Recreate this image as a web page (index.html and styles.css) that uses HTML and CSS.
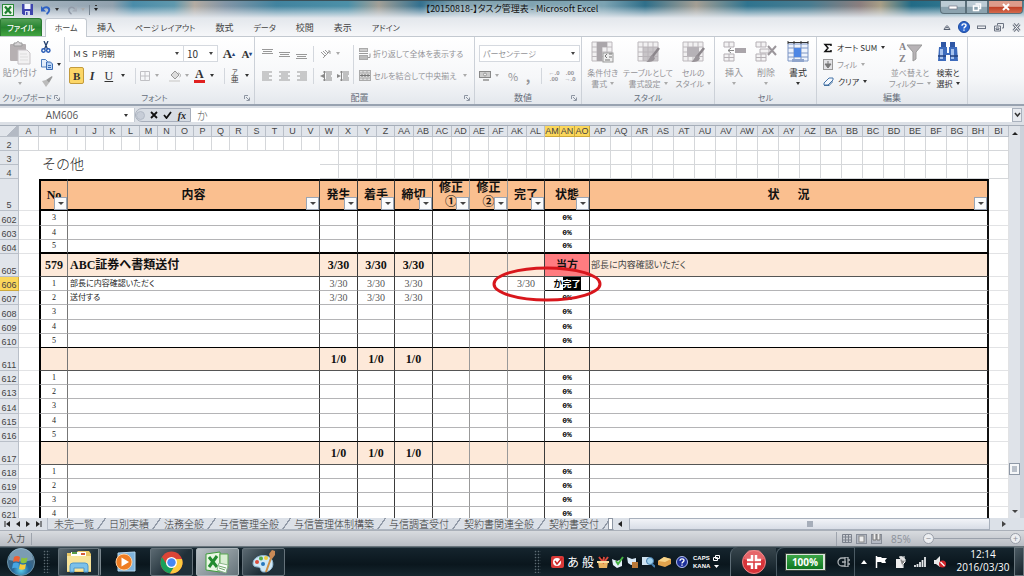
FILE: index.html
```html
<!DOCTYPE html>
<html lang="ja">
<head>
<meta charset="utf-8">
<title>【20150818-】タスク管理表 - Microsoft Excel</title>
<link rel="stylesheet" href="styles.css">
</head>
<body>
<header class="titlebar">
  <div class="quick">
    <svg width="12" height="12" viewBox="0 0 12 12"><rect x=".5" y=".5" width="11" height="11" fill="#e9f5e6" stroke="#2d8a3c"/><path d="M3 2.500L9 9.500M9 2.500L3 9.500" stroke="#1e8030" stroke-width="2.200"/></svg>
    <button aria-label="上書き保存"><svg width="11" height="11" viewBox="0 0 11 11"><path d="M0 0h11v11H1.500L0 9.500z" fill="#3f45ad"/><rect x="2.500" width="6" height="5" fill="#f4f6ff"/><rect x="3" y="7" width="5" height="4" fill="#d6daf2"/><rect x="4" y="8" width="1.500" height="3" fill="#3f45ad"/></svg></button>
    <button aria-label="元に戻す"><svg width="10" height="10" viewBox="0 0 10 10"><path d="M1.500 4C5 1 9 2.500 8 6 7.500 7.500 6.500 8.500 5.500 9" fill="none" stroke="#2f62c4" stroke-width="2"/><path d="M0 1v5.500h5z" fill="#2f62c4"/></svg></button>
    <i class="arrow"></i>
    <button aria-label="やり直し"><svg width="10" height="10" viewBox="0 0 10 10"><path d="M8 4C5 1 1 2.500 2 6 2.500 7.500 3.500 8.500 4.500 9" fill="none" stroke="#929ba8" stroke-width="1.500"/><path d="M10 1v5.500H5z" fill="#a5adb8"/></svg></button>
    <i class="arrow dim"></i><i class="vline"></i><i class="arrow barred"></i>
  </div>
  <h1>【20150818-】タスク管理表 - Microsoft Excel</h1>
  <div class="winbtns">
    <button aria-label="最小化"><svg width="10" height="8"><rect x="1" y="3" width="8" height="3" fill="#fff" stroke="#667" stroke-width=".6"/></svg></button>
    <button aria-label="元のサイズに戻す"><svg width="10" height="9"><path d="M3.500 1h5v4.500H7M1.500 3h5v4.500h-5z" fill="none" stroke="#fff" stroke-width="1.500"/></svg></button>
    <button class="close" aria-label="閉じる"><svg width="10" height="8"><path d="M2 1l6 6M8 1L2 7" stroke="#fff" stroke-width="2"/></svg></button>
  </div>
</header>

<nav class="tabs">
  <button class="file">ファイル</button>
  <button class="tab active">ホーム</button>
  <button class="tab kanji">挿入</button>
  <button class="tab">ページ レイアウト</button>
  <button class="tab kanji">数式</button>
  <button class="tab">データ</button>
  <button class="tab kanji">校閲</button>
  <button class="tab kanji">表示</button>
  <button class="tab">アドイン</button>
  <div class="helpers">
    <button aria-label="リボンの最小化"><svg width="8" height="7"><path d="M1 5.500C1 3 7 3 7 5.500zM2 3.500L4 1.500 6 3.500" fill="none" stroke="#555f70"/></svg></button>
    <button aria-label="ヘルプ"><svg width="12" height="12"><circle cx="6" cy="6" r="5.500" fill="#2d66cc" stroke="#1b489d"/><path d="M4 4.800C4 2.200 8 2.400 8 4.600 8 6 6 5.800 6 7.600M6 8.600v1.200" stroke="#fff" stroke-width="1.400" fill="none"/></svg></button>
    <button aria-label="ブックの最小化"><svg width="9" height="8"><rect x=".5" y="3" width="8" height="2.500" fill="none" stroke="#6c7482"/></svg></button>
    <button aria-label="ブックを元に戻す"><svg width="10" height="9"><path d="M3.500 2.500v-2h6v4.500H8M.5 3h6v5h-6zM2 5h3v1.500H2z" fill="none" stroke="#6c7482"/></svg></button>
    <button aria-label="ブックを閉じる"><svg width="9" height="9"><path d="M1.500 1l6 7M7.500 1l-6 7" stroke="#6c7482" stroke-width="2.800"/><path d="M1.500 1l6 7M7.500 1l-6 7" stroke="#fff" stroke-width="1"/></svg></button>
  </div>
</nav>

<section class="ribbon">
  <div class="group clipboard">
    <div class="tools">
      <button class="big off"><svg width="22" height="24" viewBox="0 0 22 24"><rect x="1" y="3" width="16" height="17" rx="1" fill="#b6b0b2"/><path d="M5 5V2h2.500C8 0 10 0 10.500 2H13v3z" fill="#d7d4d6" stroke="#999"/><path d="M9 9h9l3 3v11H9z" fill="#f2f1f2" stroke="#c6c2c5"/><path d="M11 13h7M11 16h8M11 19h8" stroke="#ddd"/></svg><span>貼り付け</span><i class="arrow dim"></i></button>
      <div class="stack">
        <button aria-label="切り取り"><svg width="10" height="12" viewBox="0 0 10 12"><path d="M3 0l3.500 8M7 0L3.500 8" stroke="#23406e" stroke-width="1.300"/><circle cx="2.500" cy="9.500" r="1.700" fill="none" stroke="#2458b4" stroke-width="1.400"/><circle cx="7.300" cy="9.500" r="1.700" fill="none" stroke="#2458b4" stroke-width="1.400"/></svg></button>
        <button aria-label="コピー"><svg width="12" height="11" viewBox="0 0 12 11"><path d="M.5.5h4l2 2v5.500h-6z" fill="#e3edfa" stroke="#4d7dbd"/><path d="M5.500 3h4l2 2v5.500h-6z" fill="#b8d3f4" stroke="#3b6cb4"/><path d="M7 6.500h3M7 8.500h3" stroke="#3b6cb4"/></svg><i class="arrow"></i></button>
        <button aria-label="書式のコピー"><svg width="12" height="11" viewBox="0 0 12 11"><path d="M1 5l4-1 3 3-3 4z" fill="#bbb"/><path d="M5 4l6-4 .5 1L8 7z" fill="#999"/></svg></button>
      </div>
    </div>
    <div class="caption">クリップボード<svg class="launch" width="6" height="6"><use href="#launch"/></svg></div>
  </div>

  <div class="group font">
    <div class="tools rows">
      <div class="row">
        <span class="combo name"><select aria-label="フォント"><option>ＭＳ Ｐ明朝</option></select></span><span class="combo size"><select aria-label="フォント サイズ"><option>10</option></select></span>
        <button class="serif grow">A<sup>▴</sup></button><button class="serif shrink">A<sup>▾</sup></button>
      </div>
      <div class="row">
        <button class="bold">B</button><button class="serif italic">I</button><button class="serif under">U</button><i class="arrow"></i><i class="vline"></i>
        <button class="off" aria-label="罫線"><svg width="10" height="10"><path d="M.5.5h9v9h-9zM5 0v10M0 5h10" fill="none" stroke="#c0c0c4"/></svg></button><i class="arrow dim"></i>
        <button class="off push" aria-label="塗りつぶしの色"><svg width="12" height="12" viewBox="0 0 12 12"><path d="M2 5l4-4 4 4-4 4z" fill="#ddd" stroke="#999"/><path d="M9 3c3 0 3 4 1.500 4" fill="none" stroke="#aaa"/><rect y="10" width="11" height="2" fill="#ddd"/></svg></button><i class="arrow dim"></i>
        <button class="serif color">A</button><i class="arrow"></i><i class="vline"></i>
        <button class="ruby"><span>ア</span>亜</button><i class="arrow"></i>
      </div>
    </div>
    <div class="caption">フォント<svg class="launch" width="6" height="6"><use href="#launch"/></svg></div>
  </div>

  <div class="group align off">
    <div class="tools">
      <div class="rows">
        <div class="row">
          <button aria-label="上揃え"><svg width="11" height="12"><path d="M0 1.500h11M1 3.500h9M0 5.500h11" stroke="#999"/></svg></button>
          <button aria-label="上下中央揃え"><svg width="11" height="12"><path d="M0 4.500h11M1 6.500h9M0 8.500h11" stroke="#999"/></svg></button>
          <button aria-label="下揃え"><svg width="11" height="12"><path d="M0 6.500h11M1 8.500h9M0 10.500h11" stroke="#999"/></svg></button>
          <i class="vline"></i>
          <button aria-label="方向"><svg width="12" height="11"><path d="M1 4l4 4M3 3l4 4M5 2l3 3M3 10l7-7M10 3v3M10 3H8" stroke="#999" fill="none"/></svg></button><i class="arrow dim"></i>
        </div>
        <div class="row">
          <button aria-label="左揃え"><svg width="11" height="10"><path d="M0 1h10M0 3h7M0 5h10M0 7h7M0 9h10" stroke="#999"/></svg></button>
          <button aria-label="中央揃え"><svg width="11" height="10"><path d="M0 1h11M2 3h7M0 5h11M2 7h7M0 9h11" stroke="#999"/></svg></button>
          <button aria-label="右揃え"><svg width="11" height="10"><path d="M1 1h10M4 3h7M1 5h10M4 7h7M1 9h10" stroke="#999"/></svg></button>
          <i class="vline"></i>
          <button aria-label="インデントを減らす"><svg width="12" height="10"><path d="M3 1h9M6 3h6M6 5h5M6 7h6M3 9h9M4.500 0v10" stroke="#888"/><path d="M4 3v4L0 5z" fill="#888"/></svg></button>
          <button class="indent" aria-label="インデントを増やす"><svg width="12" height="10"><path d="M3 1h9M6 3h6M6 5h5M6 7h6M3 9h9M4.500 0v10" stroke="#888"/><path d="M0 3v4l4-2z" fill="#888"/></svg></button>
        </div>
      </div>
      <div class="rows wraps">
        <button><svg width="12" height="12"><rect x=".5" y=".5" width="8" height="3" fill="#ccc" stroke="#aaa"/><path d="M0 5.500h9M11 5.500v4H9" stroke="#999" fill="none"/><rect x=".5" y="7.500" width="8" height="4" fill="#bbb" stroke="#aaa"/></svg>折り返して全体を表示する</button>
        <button><svg width="12" height="11"><rect x=".5" y=".5" width="11" height="10" fill="#ddd" stroke="#aaa"/><path d="M0 3h12M0 8h12M4 0v3M8 0v3M4 8v3M8 8v3" stroke="#aaa"/><path d="M1 5.500h10M3 4v3M9 4v3M6 4v3" stroke="#777"/></svg>セルを結合して中央揃え<i class="arrow dim"></i></button>
      </div>
    </div>
    <div class="caption kanji">配置<svg class="launch" width="6" height="6"><use href="#launch"/></svg></div>
  </div>

  <div class="group number off">
    <div class="tools rows">
      <div class="row"><span class="combo format"><select aria-label="表示形式"><option>パーセンテージ</option></select></span></div>
      <div class="row">
        <button aria-label="通貨表示形式"><svg width="13" height="12"><rect x=".5" y="1.500" width="11" height="6" fill="#ccc" stroke="#888"/><circle cx="6" cy="4.500" r="1.500" fill="#eee" stroke="#999"/><path d="M4 9h6v2H4z" fill="#aaa"/></svg></button><i class="arrow dim"></i>
        <button class="percent">%</button><button class="comma">,</button><i class="vline"></i>
        <button class="dec"><span>←.0</span><span>.00</span></button><button class="dec"><span>.00</span><span>→.0</span></button>
      </div>
    </div>
    <div class="caption kanji">数値<svg class="launch" width="6" height="6"><use href="#launch"/></svg></div>
  </div>

  <div class="group style off">
    <div class="tools">
      <button class="big"><svg width="23" height="22"><use href="#sheet"/><path d="M6 1h5v19H6zM11 1h5v5h-5z" fill="#aaa6aa"/><rect x="12" y="12" width="10" height="9" fill="#eee" stroke="#999"/><path d="M16 13l-2 2 2 2M18 13h3M18 16h3M14 19h5" stroke="#777" fill="none"/></svg><span>条件付き</span><span>書式<i class="arrow dim"></i></span></button>
      <button class="big wide"><svg width="23" height="22"><use href="#sheet"/><path d="M6 6h15v14H6z" fill="#b6b2b7" opacity=".7"/><use href="#brush"/></svg><span>テーブルとして</span><span>書式設定<i class="arrow dim"></i></span></button>
      <button class="big"><svg width="23" height="22"><use href="#sheet"/><path d="M5 6h12v9H5z" fill="#b6b2b7"/><use href="#brush"/></svg><span>セルの</span><span>スタイル<i class="arrow dim"></i></span></button>
    </div>
    <div class="caption">スタイル</div>
  </div>

  <div class="group cells">
    <div class="tools kanji">
      <button class="big off"><svg width="23" height="22"><path d="M1 1h10v5H1zM6 1v5M1 13h10v7H1zM6 13v7M1 16.500h10" fill="#f3f2f3" stroke="#b5b0b5"/><path d="M12 7h11v5H12z" fill="#aaa5aa"/><path d="M5 9.500h6M8 7L5 9.500 8 12" fill="none" stroke="#888"/></svg><span>挿入</span><i class="arrow dim"></i></button>
      <button class="big off"><svg width="23" height="22"><path d="M1 1h10v5H1zM6 1v5M1 13h10v7H1zM6 13v7M1 16.500h10M5 8h9v4H5z" fill="#f3f2f3" stroke="#b5b0b5"/><path d="M13 5l8 9M21 5l-8 9" stroke="#9b969b" stroke-width="2"/></svg><span>削除</span><i class="arrow dim"></i></button>
      <button class="big"><svg width="24" height="22"><path d="M2 3h20v17H2zM2 7h20M2 12h20M2 16h20M8 3v17M15 3v17" fill="#eef3fc" stroke="#7c95c4"/><path d="M8 7h7v9H8z" fill="#4e86e4"/><path d="M2 1.500h20M2 0v3M8 0v3M15 0v3M22 0v3" stroke="#333"/><path d="M6 18h12v3H6z" fill="#90a5cc"/></svg><span>書式</span><i class="arrow"></i></button>
    </div>
    <div class="caption">セル</div>
  </div>

  <div class="group edit">
    <div class="tools">
      <div class="lines">
        <button><svg width="10" height="10"><path d="M8 3V1.500H2L5 5 2 8.500h6V7" fill="none" stroke="#111" stroke-width="1.500"/></svg>オート SUM<i class="arrow"></i></button>
        <button class="off"><svg width="10" height="11"><rect x=".5" y=".5" width="9" height="10" fill="#e2e2e5" stroke="#999"/><path d="M5 2v4M2 5h6L5 9z" fill="#777" stroke="#777"/></svg>フィル<i class="arrow dim"></i></button>
        <button><svg width="11" height="10"><path d="M1 6l5-5h4v2L5 8H1z" fill="#f4f8fd" stroke="#4472a8"/><path d="M1 8h5l4-4v1L6 9H1z" fill="#44709e"/></svg>クリア<i class="arrow"></i></button>
      </div>
      <button class="big off sort"><svg width="23" height="22"><text x="0" y="9" class="az">A</text><text x="0" y="21" class="az">Z</text><path d="M8 4h15l-6 7v7l-3 2v-9z" fill="#b7b3b6" stroke="#999"/></svg><span>並べ替えと</span><span>フィルター<i class="arrow dim"></i></span></button>
      <button class="big find"><svg width="22" height="22"><path d="M4 1h5v5H4zM13 1h5v5h-5z" fill="#2f57a5"/><path d="M2 6h8v6h2V6h8l1 14h-8v-6H9v6H1z" fill="#3d6bbc"/><path d="M3 8h3v10H3zM14 8h3v10h-3z" fill="#a6c2ee"/><path d="M1 15h8M13 15h8" stroke="#23427f" stroke-width="1.500"/></svg><span>検索と</span><span>選択<i class="arrow"></i></span></button>
    </div>
    <div class="caption kanji">編集</div>
  </div>
</section>

<section class="formula">
  <label class="namebox"><input aria-label="名前ボックス" value="AM606"><i class="arrow"></i></label>
  <div class="fx">
    <i class="knob"></i>
    <button aria-label="キャンセル"><svg width="8" height="8"><path d="M1 1l6 6M7 1L1 7" stroke="#111" stroke-width="1.800"/></svg></button>
    <button aria-label="入力"><svg width="9" height="8"><path d="M1 4l2.500 3L8 1" stroke="#111" stroke-width="1.800" fill="none"/></svg></button>
    <button class="fn">fx</button>
  </div>
  <input class="entry" aria-label="数式バー" value="か">
  <button class="expand" aria-label="数式バーの展開"><svg width="7" height="6"><path d="M1 1l2.500 3L6 1" fill="none" stroke="#333" stroke-width="1.500"/></svg></button>
</section>

<main class="sheet">
  <div class="grid">
  <table>
    <colgroup><col class="c-head"><col class="c-a"><col class="c-h"><col span="14" class="c-18"><col span="3" class="c-19"><col class="c-18"><col span="3" class="c-19"><col class="c-18"><col span="3" class="c-19"><col class="c-18"><col span="3" class="c-15"><col span="19" class="c-21"><col class="c-20"></colgroup>
    <tr class="cols"><th class="corner"></th><th>A</th><th>H</th><th>I</th><th>J</th><th>K</th><th>L</th><th>M</th><th>N</th><th>O</th><th>P</th><th>Q</th><th>R</th><th>S</th><th>T</th><th>U</th><th>V</th><th>W</th><th>X</th><th>Y</th><th>Z</th><th>AA</th><th>AB</th><th>AC</th><th>AD</th><th>AE</th><th>AF</th><th>AK</th><th>AL</th><th class="on">AM</th><th class="on">AN</th><th class="on">AO</th><th>AP</th><th>AQ</th><th>AR</th><th>AS</th><th>AT</th><th>AU</th><th>AV</th><th>AW</th><th>AX</th><th>AY</th><th>AZ</th><th>BA</th><th>BB</th><th>BC</th><th>BD</th><th>BE</th><th>BF</th><th>BG</th><th>BH</th><th>BI</th></tr>
    <tr><th>2</th><td><td><td><td><td><td><td><td><td><td><td><td><td><td><td><td><td><td><td><td><td><td><td><td><td><td><td><td><td><td><td><td><td><td><td><td><td><td><td><td><td><td><td><td><td><td><td><td><td><td><td></tr>
    <tr><th>3</th><td class="plain"><td class="heading" colspan="15" rowspan="2">その他</td><td><td><td><td><td><td><td><td><td><td><td><td><td><td><td><td><td><td><td><td><td><td><td><td><td><td><td><td><td><td><td><td><td><td><td></tr>
    <tr class="above"><th>4</th><td class="plain"><td><td><td><td><td><td><td><td><td><td><td><td><td><td><td><td><td><td><td><td><td><td><td><td><td><td><td><td><td><td><td><td><td><td><td></tr>
    <tr class="data titles"><th>5</th><td></td>
      <td>No<button class="filter" aria-label="No フィルター"></button></td>
      <td colspan="14">内容<button class="filter" aria-label="内容 フィルター"></button></td>
      <td colspan="2">発生<button class="filter" aria-label="発生 フィルター"></button></td>
      <td colspan="2">着手<button class="filter" aria-label="着手 フィルター"></button></td>
      <td colspan="2">締切<button class="filter" aria-label="締切 フィルター"></button></td>
      <td colspan="2">修正<br>①<button class="filter" aria-label="修正① フィルター"></button></td>
      <td colspan="2">修正<br>②<button class="filter" aria-label="修正② フィルター"></button></td>
      <td colspan="2">完了<button class="filter" aria-label="完了 フィルター"></button></td>
      <td colspan="3">状態<button class="filter" aria-label="状態 フィルター"></button></td>
      <td colspan="19">状 　 況<button class="filter" aria-label="状況 フィルター"></button></td><td></td></tr>
    <tr class="data more"><th>602</th><td></td><td>3</td><td colspan="14"></td><td colspan="2"></td><td colspan="2"></td><td colspan="2"></td><td colspan="2"></td><td colspan="2"></td><td colspan="2"></td><td colspan="3">0%</td><td colspan="19"></td><td></td></tr>
    <tr class="data"><th>603</th><td></td><td>4</td><td colspan="14"></td><td colspan="2"></td><td colspan="2"></td><td colspan="2"></td><td colspan="2"></td><td colspan="2"></td><td colspan="2"></td><td colspan="3">0%</td><td colspan="19"></td><td></td></tr>
    <tr class="data thick"><th>604</th><td></td><td>5</td><td colspan="14"></td><td colspan="2"></td><td colspan="2"></td><td colspan="2"></td><td colspan="2"></td><td colspan="2"></td><td colspan="2"></td><td colspan="3">0%</td><td colspan="19"></td><td></td></tr>
    <tr class="data task"><th>605</th><td></td><td>579</td><td colspan="14">ABC証券へ書類送付</td><td colspan="2">3/30</td><td colspan="2">3/30</td><td colspan="2">3/30</td><td colspan="2"></td><td colspan="2"></td><td colspan="2"></td><td colspan="3" class="alert">当方</td><td colspan="19">部長に内容確認いただく</td><td></td></tr>
    <tr class="data"><th class="on">606</th><td></td><td>1</td><td colspan="14">部長に内容確認いただく</td><td colspan="2">3/30</td><td colspan="2">3/30</td><td colspan="2">3/30</td><td colspan="2"></td><td colspan="2"></td><td colspan="2">3/30</td><td colspan="3" class="editing">か<mark>完了</mark><svg class="ring" width="112" height="40"><ellipse cx="56" cy="20" rx="53" ry="16"/></svg></td><td colspan="19"></td><td></td></tr>
    <tr class="data"><th>607</th><td></td><td>2</td><td colspan="14">送付する</td><td colspan="2">3/30</td><td colspan="2">3/30</td><td colspan="2">3/30</td><td colspan="2"></td><td colspan="2"></td><td colspan="2"></td><td colspan="3">0%</td><td colspan="19"></td><td></td></tr>
    <tr class="data more"><th>608</th><td></td><td>3</td><td colspan="14"></td><td colspan="2"></td><td colspan="2"></td><td colspan="2"></td><td colspan="2"></td><td colspan="2"></td><td colspan="2"></td><td colspan="3">0%</td><td colspan="19"></td><td></td></tr>
    <tr class="data"><th>609</th><td></td><td>4</td><td colspan="14"></td><td colspan="2"></td><td colspan="2"></td><td colspan="2"></td><td colspan="2"></td><td colspan="2"></td><td colspan="2"></td><td colspan="3">0%</td><td colspan="19"></td><td></td></tr>
    <tr class="data last"><th>610</th><td></td><td>5</td><td colspan="14"></td><td colspan="2"></td><td colspan="2"></td><td colspan="2"></td><td colspan="2"></td><td colspan="2"></td><td colspan="2"></td><td colspan="3">0%</td><td colspan="19"></td><td></td></tr>
    <tr class="data task"><th>611</th><td></td><td></td><td colspan="14"></td><td colspan="2">1/0</td><td colspan="2">1/0</td><td colspan="2">1/0</td><td colspan="2"></td><td colspan="2"></td><td colspan="2"></td><td colspan="3"></td><td colspan="19"></td><td></td></tr>
    <tr class="data"><th>612</th><td></td><td>1</td><td colspan="14"></td><td colspan="2"></td><td colspan="2"></td><td colspan="2"></td><td colspan="2"></td><td colspan="2"></td><td colspan="2"></td><td colspan="3">0%</td><td colspan="19"></td><td></td></tr>
    <tr class="data"><th>613</th><td></td><td>2</td><td colspan="14"></td><td colspan="2"></td><td colspan="2"></td><td colspan="2"></td><td colspan="2"></td><td colspan="2"></td><td colspan="2"></td><td colspan="3">0%</td><td colspan="19"></td><td></td></tr>
    <tr class="data more"><th>614</th><td></td><td>3</td><td colspan="14"></td><td colspan="2"></td><td colspan="2"></td><td colspan="2"></td><td colspan="2"></td><td colspan="2"></td><td colspan="2"></td><td colspan="3">0%</td><td colspan="19"></td><td></td></tr>
    <tr class="data"><th>615</th><td></td><td>4</td><td colspan="14"></td><td colspan="2"></td><td colspan="2"></td><td colspan="2"></td><td colspan="2"></td><td colspan="2"></td><td colspan="2"></td><td colspan="3">0%</td><td colspan="19"></td><td></td></tr>
    <tr class="data last"><th>616</th><td></td><td>5</td><td colspan="14"></td><td colspan="2"></td><td colspan="2"></td><td colspan="2"></td><td colspan="2"></td><td colspan="2"></td><td colspan="2"></td><td colspan="3">0%</td><td colspan="19"></td><td></td></tr>
    <tr class="data task"><th>617</th><td></td><td></td><td colspan="14"></td><td colspan="2">1/0</td><td colspan="2">1/0</td><td colspan="2">1/0</td><td colspan="2"></td><td colspan="2"></td><td colspan="2"></td><td colspan="3"></td><td colspan="19"></td><td></td></tr>
    <tr class="data"><th>618</th><td></td><td>1</td><td colspan="14"></td><td colspan="2"></td><td colspan="2"></td><td colspan="2"></td><td colspan="2"></td><td colspan="2"></td><td colspan="2"></td><td colspan="3">0%</td><td colspan="19"></td><td></td></tr>
    <tr class="data"><th>619</th><td></td><td>2</td><td colspan="14"></td><td colspan="2"></td><td colspan="2"></td><td colspan="2"></td><td colspan="2"></td><td colspan="2"></td><td colspan="2"></td><td colspan="3">0%</td><td colspan="19"></td><td></td></tr>
    <tr class="data"><th>620</th><td></td><td>3</td><td colspan="14"></td><td colspan="2"></td><td colspan="2"></td><td colspan="2"></td><td colspan="2"></td><td colspan="2"></td><td colspan="2"></td><td colspan="3">0%</td><td colspan="19"></td><td></td></tr>
    <tr class="data"><th>621</th><td></td><td>4</td><td colspan="14"></td><td colspan="2"></td><td colspan="2"></td><td colspan="2"></td><td colspan="2"></td><td colspan="2"></td><td colspan="2"></td><td colspan="3">0%</td><td colspan="19"></td><td></td></tr>
  </table>
  </div>
  <div class="vscroll"><i class="up"></i><i class="space"></i><i class="thumb"></i><i class="rest"></i><i class="down"></i></div>
</main>

<section class="sheettabs">
  <div class="navs">
    <svg width="6" height="6"><path d="M1 0v6" stroke="#222"/><path d="M6 0v6L2 3z" fill="#222"/></svg>
    <svg width="6" height="6"><path d="M5 0v6L1 3z" fill="#222"/></svg>
    <svg width="6" height="6"><path d="M1 0v6l4-3z" fill="#222"/></svg>
    <svg width="6" height="6"><path d="M0 0v6l4-3z" fill="#222"/><path d="M5 0v6" stroke="#222"/></svg>
  </div>
  <div class="names">
    <a href="#t1">未完一覧</a><a href="#t2">日別実績</a><a href="#t3">法務全般</a><a href="#t4">与信管理全般</a><a href="#t5">与信管理体制構築</a><a href="#t6">与信調査受付</a><a href="#t7">契約書関連全般</a><a href="#t8">契約書受付</a>
  </div>
  <i class="split"></i>
  <div class="hscroll"><i class="left"></i><span class="bar"><i class="grip"></i></span><i class="right"></i></div>
</section>

<section class="status">
  <span class="mode">入力</span><i class="vline"></i>
  <div class="view">
    <svg width="10" height="9"><path d="M.5.5h9v8h-9zM0 3h10M0 6h10M3.500 0v9M6.500 0v9" fill="none" stroke="#7c828d"/></svg>
    <svg width="11" height="10"><rect x=".5" y=".5" width="10" height="9" fill="#b5bac4" stroke="#888e99"/><rect x="3" y="2" width="5" height="6" fill="#eee" stroke="#888"/></svg>
    <svg width="11" height="10"><rect x=".5" y=".5" width="10" height="9" fill="#b5bac4" stroke="#888e99"/><path d="M2 0v6h3V0M6 0v6h3V0" fill="#eee" stroke="#777"/></svg>
    <span class="zoomtext">85%</span>
    <button class="round">−</button><input type="range" aria-label="ズーム" min="10" max="400" value="85"><button class="round">+</button>
  </div>
</section>

<footer class="taskbar">
  <button class="orb" aria-label="スタート"><svg width="28" height="28"><defs><radialGradient id="orb" cy=".8"><stop stop-color="#5dd0ee"/><stop offset=".6" stop-color="#25679a"/><stop offset="1" stop-color="#3d6685"/></radialGradient></defs><circle cx="14" cy="14" r="13.500" fill="url(#orb)" stroke="#6b94aa"/><path d="M2 12A12 12 0 0 1 26 12Q14 15 2 12" fill="#c8deea" opacity=".45"/><path d="M7 9q3-2 6 0l-1 5q-3-1.500-6 0z" fill="#ee6134"/><path d="M14.500 9.500q3 1.500 6 0l-1 5q-3 1.500-6 0z" fill="#8fc43e"/><path d="M6 15.500q3-2 6 0l-1 5q-3-1.500-6 0z" fill="#46a5e4"/><path d="M13 16q3 1.500 6 0l-1 5q-3 1.500-6 0z" fill="#fbcb3b"/></svg></button>
  <i class="dots"></i>
  <button class="app" aria-label="エクスプローラー"><svg width="26" height="24"><path d="M1 3h9l2-2h11l2 3v18H1z" fill="#e9c765"/><path d="M5 2h15v6H5z" fill="#fff"/><path d="M6 3h5" stroke="#5a9c47" stroke-width="2"/><path d="M15 4h4" stroke="#d75b3b" stroke-width="2"/><path d="M1 6h24v15H1z" fill="#f8e49a"/><path d="M4 22v-6q0-3 3-3h12q3 0 3 3v6h-4v-4H8v4z" fill="#7cc1ea" stroke="#4f98cc"/></svg></button>
  <button class="app flat" aria-label="Media Player"><svg width="22" height="22"><path d="M3 2l17-1v19H3z" fill="#7fb4dc" stroke="#b6d8ef"/><circle cx="9" cy="11" r="8" fill="#ee7d23" stroke="#ffd0a0"/><path d="M6.500 6.500v9L14 11z" fill="#fff"/></svg></button>
  <button class="app" aria-label="Chrome"><svg width="23" height="23"><circle cx="11.500" cy="11.500" r="11" fill="#dc4537"/><path d="M2 6A11 11 0 0 0 10 22.400L15.500 14 7 14z" fill="#1ba05b"/><path d="M22 8A11 11 0 0 1 10 22.400L16.500 12 13 8z" fill="#fcca3e"/><circle cx="11.500" cy="11.500" r="5.500" fill="#fff"/><circle cx="11.500" cy="11.500" r="4.200" fill="#4587f3"/></svg></button>
  <button class="app lit" aria-label="Excel"><svg width="25" height="23"><path d="M1 3l14-2v20L1 19z" fill="#e9f6e3" stroke="#3f9d3d"/><path d="M15 3h8v14h-8z" fill="#d9eed3" stroke="#5aa852"/><path d="M4 6l8 10M12 5L4 16" stroke="#238b30" stroke-width="3"/><path d="M14 12l9 2-2 8-9-3z" fill="#f8fcf8" stroke="#8bb68a"/><path d="M14 15l7 2M14 17l6 2" stroke="#6fa86b"/></svg></button>
  <button class="app" aria-label="ペイント"><svg width="25" height="24"><path d="M3 10C7 4 18 4 21 10c3 7-2 12-8 12-5 0-2-5-6-5-5 0-6-3-4-7z" fill="#cfe8f6" stroke="#8fb8d2"/><circle cx="6" cy="12" r="2" fill="#d94c3c"/><circle cx="10" cy="8.500" r="2" fill="#56ab48"/><circle cx="15" cy="8" r="2" fill="#eecb3e"/><circle cx="12" cy="14" r="2" fill="#2878bd"/><path d="M15 22L20 8" stroke="#cf8e43" stroke-width="2"/><path d="M19 8l-1-4 3-4 3 1v4l-3 4z" fill="#c98a56"/></svg></button>
  <div class="ime">
    <i class="dots"></i>
    <svg width="13" height="12"><rect width="13" height="12" rx="2" fill="#d93a38"/><circle cx="6" cy="6" r="4" fill="#fff"/><path d="M4 5l2 3 5-6" stroke="#c22" stroke-width="1.500" fill="none"/></svg>
    <span class="kana">あ</span><span class="kana">般</span>
    <svg width="12" height="12"><path d="M1 6h10l-1 6H2z" fill="#e8b260"/><path d="M2 1l4 5 1-5M8 5l3-4" stroke="#d8483c" stroke-width="2"/><path d="M0 5h12v2H0z" fill="#f6dca0"/></svg>
    <svg width="12" height="12"><path d="M0 3l5 2v7L1 9zM5 5l5-2v7l-5 2z" fill="#e6f1fb"/><path d="M4 5l2 3 5-7" stroke="#45b243" stroke-width="2" fill="none"/></svg>
    <svg width="12" height="12"><path d="M0 1l5 2 4-1v6L4 9 1 7z" fill="#d8eaf8"/><path d="M5 6h6v6H5z" fill="#b87838"/></svg>
    <svg width="13" height="12"><path d="M0 1h8v8H0z" fill="#cfe3f2"/><circle cx="8" cy="5" r="3.500" fill="#9ed1ee" stroke="#467ead"/><path d="M10 8l3 3" stroke="#467ead" stroke-width="2"/></svg>
    <svg width="13" height="11"><path d="M0 5l6-4 7 2v5l-6 3-7-2z" fill="#dfa24d"/><path d="M0 5l6-4 7 2-6 3z" fill="#f7d48a"/></svg>
    <svg class="q" width="12" height="12"><circle cx="6" cy="6" r="5.500" fill="#1c2f9a" stroke="#b7c1ee"/><path d="M4 4.800C4 2.200 8 2.400 8 4.600 8 6 6 5.800 6 7.600M6 8.600v1.200" stroke="#fff" stroke-width="1.300" fill="none"/></svg>
    <span class="caps">CAPS<br>KANA</span>
    <svg width="7" height="14"><path d="M2.500.5h4v3h-4zM.5 2.500h4v3h-4z" fill="none" stroke="#fff"/><path d="M1 10h5l-2.500 3z" fill="#fff"/></svg>
  </div>
  <div class="trend"><svg width="24" height="24"><circle cx="12" cy="12" r="11.500" fill="#d8343a" stroke="#f08a8a"/><path d="M2 9A10 10 0 0 1 22 9Q12 14 2 9" fill="#f0888a" opacity=".6"/><path d="M10 5v5H5M14 5v5h5M10 19v-5H5M14 19v-5h5" fill="none" stroke="#fff" stroke-width="2.500"/></svg></div>
  <div class="power"><span class="battery">100%</span>
    <svg width="13" height="10"><path d="M8 1H5a4 4 0 0 0 0 8h3M8 0h3v10H8zM11 3h2M11 7h2M5 5h4" fill="none" stroke="#aab0b4" stroke-width="1.300"/></svg></div>
  <div class="tray">
    <svg width="6" height="4"><path d="M0 4l3-4 3 4z" fill="#fff"/></svg>
    <svg width="12" height="12"><path d="M1.500 0v12" stroke="#fff" stroke-width="1.500"/><path d="M2 1h4l1 1h5l-2 2.500 1 2.500H7L6 6H2z" fill="#fff"/></svg>
    <svg width="11" height="12"><path d="M1 3h7v9H1z" fill="#eee"/><path d="M4 1h4v4M9 0v3M6 0v3M5 3h5v3l-2 2v4" stroke="#fff" fill="#888"/></svg>
    <svg width="12" height="10"><path d="M1 10V8M3.500 10V7M6 10V5M8.500 10V3M11 10V0" stroke="#e6e9eb" stroke-width="1.800"/></svg>
    <svg width="12" height="12"><path d="M0 4h2l4-4v11L2 8H0z" fill="#e9e9e9"/><circle cx="8.500" cy="8" r="3.500" fill="#d2252b"/><path d="M6.500 6l4 4" stroke="#fff" stroke-width="1.200"/></svg>
  </div>
  <time class="clock">12:14<br>2016/03/30</time>
  <button class="peek" aria-label="デスクトップの表示"></button>
</footer>

<svg width="0" height="0" class="defs"><defs>
  <symbol id="launch"><path d="M.5 4V.5H4M2 2l3 3M5.500 2.500v3h-3" fill="none" stroke="#8e96a2"/></symbol>
  <symbol id="sheet"><path d="M1 1h20v19H1zM1 6h20M1 11h20M1 15.500h20M6 1v19M11 1v19M16 1v19" fill="#f1f0f1" stroke="#bcb8bc"/></symbol>
  <symbol id="brush"><path d="M22 7L15 16" stroke="#8b868b" stroke-width="2.500"/><path d="M15 14l3 3c-1 4-5 4-9 4 3-1 3-5 6-7z" fill="#999499"/></symbol>
</defs></svg>
</body>
</html>
```

FILE: styles.css
```css
* { box-sizing: border-box; }
body {
  margin: 0; height: 100vh; overflow: hidden; position: relative;
  display: flex; flex-direction: column; background: #cdd4dd; color: #222;
  font: 9px/10px "Noto Sans CJK JP", sans-serif; font-feature-settings: "palt";
}
button, input, select { font: inherit; font-feature-settings: inherit; color: inherit; border: 0; padding: 0; margin: 0; background: none; min-width: 0; }
button { display: flex; align-items: center; justify-content: center; white-space: nowrap; }
svg { display: block; flex: none; }
.defs { position: absolute; }
.arrow { flex: none; border: 2px solid transparent; border-top: 3px solid #333; border-bottom: 0; width: 4px; height: 3px; }
.arrow.dim { border-top-color: #aaa; }
.vline { width: 1px; height: 16px; background: #d3d7dd; flex: none; }

/* title bar */
.titlebar {
  flex: 0 0 18px; display: grid; grid-template-columns: 1fr auto 1fr; border-top: 1px solid #3b5059;
  background:
    linear-gradient(#fff0 30%, #e1e6ec),
    linear-gradient(90deg, #a9b9c5 0, #91a1ae 11%, #4a8ca9 13%, #5f98ad 17%, #b3aba2 19%, #8295a6 22%, #41839f 27%, #4c90a8 34%, #a19f97 37%, #34718f 41%, #83a3b0 45%, #7ca3b2 59%, #2f6f8a 63%, #a39e94 68%, #2f748f 73%, #477c91 79%, #8b7e7e 84%, #a79e86 86%, #226b86 89%, #4b889d 100%);
}
.quick { display: flex; align-items: center; gap: 4px; padding-left: 2px; }
.quick button { margin-left: 4px; }
.quick .vline { height: 10px; background: #778490; }
.barred { border-top-color: #222; box-shadow: 0 -4px 0 -1px #333; }
h1 { margin: 0; font-size: 9px; line-height: 16px; font-weight: 400; color: #111; text-shadow: 0 0 4px #fff9; }
.winbtns { justify-self: end; display: flex; margin-right: 1px; height: 13px; }
.winbtns button { width: 22px; border: 1px solid #5b707b; border-top: 0; background: linear-gradient(#bccbd4 45%, #8ca3af 50%); }
.winbtns button:first-child { border-radius: 0 0 0 4px; width: 26px; }
.winbtns .close { width: 35px; border-radius: 0 0 4px 0; background: linear-gradient(#dd9c8b 45%, #be3f25 50%, #d46a4d); }

/* ribbon tabs */
.tabs { flex: 0 0 19px; display: flex; background: linear-gradient(#e3e7ec, #f6f7f9); border-bottom: 1px solid #c3c9d0; color: #444; font-size: 8px; }
.tabs .kanji, .ribbon .kanji { font-size: 9px; }
.tab { padding: 0 10px; margin-bottom: -1px; }
.tab.active { background: #fff; border: 1px solid #c3c9d0; border-bottom: 0; border-radius: 3px 3px 0 0; width: 42px; }
.file { width: 42px; margin-right: 3px; color: #fff; font-weight: 500; border-radius: 2px 3px 0 0; background: linear-gradient(#54a057, #278430 50%, #43a542); border: 1px solid #2a7a31; border-bottom: 0; }
.helpers { margin-left: auto; display: flex; align-items: center; gap: 8px; padding-right: 3px; }
.helpers button:nth-child(-n+2) { margin-right: -1px; }

/* ribbon */
.ribbon { flex: 0 0 69px; display: flex; background: linear-gradient(#fff, #f6f7f9 60%, #e4e8ed); border-bottom: 2px solid #98a2b0; color: #333; font-size: 8px; }
.group { display: flex; flex-direction: column; border-right: 1px solid #ccd1d8; flex: none; }
.tools { flex: 1; display: flex; min-height: 0; }
.caption { height: 14px; line-height: 15px; text-align: center; white-space: nowrap; color: #666e7a; position: relative; padding-right: 10px; }
.style .caption, .cells .caption, .edit .caption { padding-right: 0; }
.launch { position: absolute; right: 4px; bottom: 3px; }
.off, .off button, .off select { color: #949498; }
.big { flex-direction: column; justify-content: flex-start; padding-top: 4px; line-height: 11px; }
.big svg { margin-bottom: 2px; height: 24px; }
.big span { display: flex; align-items: center; gap: 3px; }
.big > .arrow { margin-top: 4px; }
.rows { display: flex; flex-direction: column; gap: 5px; padding-top: 8px; }
.row { display: flex; align-items: center; height: 17px; }
.combo { position: relative; display: flex; height: 17px; border: 1px solid #d5d9df; background: #fff; }
.combo::after { content: ""; position: absolute; right: 4px; top: 6px; border: 2px solid transparent; border-top: 3px solid #444; }
.combo select { appearance: none; width: 100%; padding-left: 3px; }
.serif { font-family: "Liberation Serif", serif; font-weight: 700; font-size: 12px; }

.clipboard { width: 65px; }
.clipboard .big { width: 38px; padding-left: 2px; font-size: 9px; }
.stack { display: flex; flex-direction: column; align-items: flex-start; gap: 6px; padding: 4px 0 0 3px; }
.stack button { gap: 4px; }

.font { width: 190px; }
.font .rows { padding-left: 4px; }
.font .vline, .font .row .arrow { margin: 0 5px; }
.combo.name { width: 115px; }
.combo.name select { font-feature-settings: normal; }
.combo.size { width: 35px; margin-left: -1px; }
.combo.size select { font-size: 10px; }
.grow { font-size: 13px; margin-left: 4px; width: 14px; }
.shrink { font-size: 11px; width: 14px; margin-left: 4px; }
.serif sup { font-size: 6px; line-height: 6px; color: #25457f; }
.bold { width: 17px; height: 17px; font: 700 11px "Liberation Serif", serif; background: #fcd667; border: 1px solid #c39b3c; border-radius: 2px; }
.italic { width: 18px; font-style: italic; }
.under { width: 16px; text-decoration: underline; font-weight: 400; margin-left: 2px; }
.push { margin-left: 6px; }
.color { width: 12px; height: 14px; border-bottom: 3px solid #e02020; line-height: 10px; }
.ruby { flex-direction: column; width: 12px; line-height: 8px; }
.ruby span { font-size: 6px; line-height: 7px; }

.align { width: 220px; }
.align .rows { padding-left: 7px; }
.align .row { gap: 6px; }
.align .row .arrow { margin-left: -2px; }
.indent { margin-left: -1px; }
.align .wraps { margin-left: auto; margin-top: 8px; padding: 0 0 0 5px; width: 121px; border-left: 1px solid #d3d7dd; height: 39px; }
.wraps button { height: 17px; justify-content: flex-start; gap: 2px; }
.wraps .arrow { margin-left: 4px; }

.number { width: 107px; }
.number .rows { padding-left: 3px; }
.format { width: 101px; }
.number .row { padding-left: 1px; }
.number .row .arrow { margin: 0 8px 0 3px; }
.percent { width: 12px; font-size: 11px; }
.comma { width: 18px; font-size: 14px; font-weight: 700; }
.number .vline { margin: 0 5px 0 4px; }
.dec { flex-direction: column; font: 700 6px/6px "Liberation Sans", sans-serif; width: 14px; margin-right: 2px; }

.style { width: 133px; }
.style .tools { padding: 0 1px; }
.style .big { flex: 1 1 40px; }
.style .big.wide { flex-basis: 52px; }
.cells { width: 102px; }
.cells .big { width: 32px; }
.cells .tools { padding-left: 3px; }
.edit { width: 151px; }
.lines { display: flex; flex-direction: column; gap: 6px; align-items: flex-start; width: 72px; padding: 5px 0 0 6px; }
.lines button { gap: 4px; height: 11px; color: #333; }
.lines .off { color: #949498; }
.sort { width: 42px; }
.find { width: 34px; }
.az { font: 700 10px "Liberation Serif", serif; fill: #898589; }

/* formula bar */
.formula { flex: 0 0 20px; min-height: 0; display: flex; padding: 2px 2px 3px 0; background: #dce0e6; border-bottom: 1px solid #a6aeb9; }
.namebox { width: 135px; min-height: 0; display: flex; align-items: stretch; background: #fff; padding-right: 6px; border-right: 1px solid #c5cbd3; }
.namebox input { flex: 1; text-align: center; font-size: 10px; color: #555; font-family: "Open Sans", sans-serif; }
.namebox .arrow { align-self: center; }
.fx { width: 56px; display: flex; align-items: center; justify-content: space-between; padding: 0 4px 0 0; border: 1px solid #a7aebb; border-radius: 8px 0 0 8px; background: #d8dde4; }
.knob { width: 9px; height: 9px; border-radius: 50%; background: #c7cdd7; border: 1px solid #b3bac6; }
.fn { font: italic 700 10px "Liberation Serif", serif; }
.entry { flex: 1; background: #fff; padding-left: 6px; font-size: 11px; color: #555; font-weight: 300; height: 14px; }
.expand { width: 10px; border: 1px solid #aab2be; background: #e8ebf0; }

/* worksheet */
.sheet { flex: 1 1 0; min-height: 0; display: flex; background: #fff; }
.grid { flex: 1; overflow: hidden; }
table { width: 100%; table-layout: fixed; border-collapse: separate; border-spacing: 0; font-family: "Liberation Serif", "Noto Sans CJK JP", serif; font-size: 8px; line-height: 10px; color: #222; }
.c-head { width: 19px; } .c-a { width: 20px; } .c-h { width: 29px; } .c-15 { width: 15px; } .c-18 { width: 18px; }
.c-19 { width: 19px; } .c-20 { width: 20px; } .c-21 { width: 21px; }
th, td { padding: 0; height: 14px; border: 0 solid #d5d7da; border-width: 0 1px 1px 0; white-space: nowrap; }
th { font: 9px/9px "Liberation Sans", sans-serif; color: #444; background: #e1e5eb; border-color: #b9bfc8; vertical-align: bottom; }
.cols th { height: 11px; font-size: 9px; line-height: 10px; }
.cols th.on, th.on { background: #fbd75b; border-color: #cda93b; }
.corner { background: linear-gradient(135deg, #e1e5eb 60%, #b4bac4 60%); }
td.heading { font-size: 14px; line-height: 20px; font-weight: 300; border-color: #fff; padding-left: 3px; font-feature-settings: normal; }
td.plain { border-color: #fff; }
.above td { border-color: #d5d7da; }
.above td:nth-child(2) { border-color: #fff; }
.data td { text-align: center; border-color: #b4b4b6 #3b3b3b #b4b4b6 #000; }
.data.more > * { height: 15px; }
.data td:nth-child(2), .data td:nth-child(13) { border-color: #e2e3e5; }
.data td:nth-child(2) { border-right: 0; }
.data td:nth-child(3) { border-left: 2px solid #000; border-right-color: #777; font-size: 8px; }
.data td:nth-child(4) { text-align: left; padding-left: 2px; }
.data td:nth-child(5), .data td:nth-child(6), .data td:nth-child(7), .data td:nth-child(10) { font-size: 10px; color: #555; }
.data td:nth-child(8), .data td:nth-child(9) { border-right-color: #999; }
.data td:nth-child(11) { font: 700 8px/10px "Liberation Mono", "Noto Sans CJK JP", monospace; color: #000; }
.data td:nth-child(12) { text-align: left; padding-left: 1px; border-right: 2px solid #111; }
.data.thick td:nth-child(n+3):nth-child(-n+12) { border-bottom: 2px solid #000; }
.data.last td:nth-child(n+3):nth-child(-n+12) { border-bottom: 1px solid #000; }
.data.task > * { height: 23px; }
.data.task td:nth-child(n+3):nth-child(-n+12) { background: #fde9d9; border-bottom-color: #555; }
.data.task td:nth-child(n+3):nth-child(-n+11) { font: 700 12px/14px "Liberation Serif", "Noto Sans CJK JP", serif; color: #111; }
.data.task td:nth-child(3) { font-size: 14px; }
.data.task td:nth-child(12) { font-size: 9px; color: #444; }
.data.task td.alert:nth-child(11) { background: #ff7c80; font-size: 11px; }
.data.titles > * { height: 32px; }
.data.titles td:nth-child(n+3):nth-child(-n+12) { position: relative; background: #fabf8f; border-top: 2px solid #000; border-bottom: 2px solid #000; font: 700 12px/14px "Liberation Serif", "Noto Sans CJK JP", serif; color: #111; text-align: center; padding: 0; font-feature-settings: normal; }
.data.titles td:nth-child(3) { text-align: left; padding-left: 2px; font-size: 13px; }
.filter { position: absolute; right: 0; bottom: -1px; width: 13px; height: 13px; background: #fafbfc; border: 1px solid #9aa5b5; }
.filter::after { content: ""; border: 3px solid transparent; border-top: 3px solid #444; border-bottom: 0; }
.data td.editing:nth-child(11) { position: relative; font: 700 9px/11px "Noto Sans CJK JP", sans-serif; border-color: #222; }
mark { background: #000; color: #fff; }
.ring { position: absolute; left: -54px; top: -13px; z-index: 2; }
.ring ellipse { fill: none; stroke: #d8161c; stroke-width: 3; }

.vscroll { flex: 0 0 15px; display: flex; flex-direction: column; align-items: center; background: #dfe3e9; border-right: 4px solid #ccd2db; padding: 6px 0 5px; }
.vscroll .up { border: 3px solid transparent; border-top: 0; border-bottom: 3px solid #222; }
.vscroll .down { border: 3px solid transparent; border-bottom: 0; border-top: 3px solid #444; }
.space { flex: 327; }
.rest { flex: 35; }
.thumb { width: 11px; height: 12px; border: 1px solid #8e98a6; background: #b9c0ca; box-shadow: inset 0 0 0 2px #f5f7f9; }

/* sheet tabs */
.sheettabs { flex: 0 0 12px; min-height: 0; display: flex; background: #dce1e8; color: #555; }
.navs { width: 48px; display: flex; align-items: center; justify-content: space-between; padding: 0 5px 0 4px; border-right: 1px solid #b5bcc7; }
.names { display: flex; font-size: 10px; line-height: 11px; font-feature-settings: normal; font-weight: 300; border-bottom: 1px solid #aeb6c1; padding-left: 6px; }
.names a { color: #333; text-decoration: none; display: flex; white-space: nowrap; }
.names a::after { content: ""; width: 15px; background: linear-gradient(125deg, #0000 47%, #8f98a6 48%, #8f98a6 54%, #0000 55%); }
.split { width: 5px; border: 1px solid #8d96a3; background: #fff; flex: none; margin-left: -6px; }
.hscroll { flex: 1; display: flex; align-items: center; padding: 0 18px 0 5px; gap: 7px; }
.left { border: 3px solid transparent; border-left: 0; border-right: 4px solid #222; }
.right { border: 3px solid transparent; border-right: 0; border-left: 4px solid #444; margin-left: 5px; }
.bar { flex: 1; height: 12px; display: flex; align-items: center; justify-content: center; border: 1px solid #a8b0bc; background: linear-gradient(#f2f4f8, #d8dde6); }
.grip { width: 6px; height: 6px; background: #a6aeba; }

/* status bar */
.status { flex: 0 0 16px; min-height: 0; display: flex; align-items: center; gap: 6px; padding-left: 7px; background: linear-gradient(#d8dbdf, #b9bdc4); border-top: 1px solid #aab0b9; color: #555; }
.status .vline { background: #9ea4ad; height: 12px; }
.view { margin-left: auto; display: flex; align-items: center; gap: 3px; border-left: 1px solid #9ea4ad; padding: 0 3px 0 5px; color: #8b9099; }
.view svg { margin-right: 1px; }
.zoomtext { width: 34px; padding-left: 5px; font: 10px "Open Sans", sans-serif; }
.round { width: 11px; height: 11px; border: 1px solid #999fa9; border-radius: 50%; background: #eceef1; line-height: 8px; }
.view input { appearance: none; width: 76px; height: 9px; margin: 0 -3px; background: linear-gradient(#9aa0aa, #9aa0aa) center / 100% 1px no-repeat; }
.view input::-webkit-slider-thumb { appearance: none; width: 0; height: 0; }

/* taskbar */
.taskbar { flex: 0 0 30px; display: flex; align-items: stretch; background: linear-gradient(#4b5d67 0, #15242d 5%, #0a161d 60%, #16272f); border-top: 1px solid #69747b; color: #fff; }
.orb { width: 40px; padding-left: 1px; }
.dots { width: 7px; margin: 3px 8px 3px 3px; background: radial-gradient(circle, #5d6b73 35%, #0000 50%) 0 0 / 3px 3px; flex: none; }
.app { width: 43px; margin: 1px 3px 0 0; border: 1px solid #65727a; border-radius: 2px; background: linear-gradient(135deg, #5c6a72, #1f2f38 60%); }
.app:nth-child(3) { border-right: 3px double #7a868d; }
.app.flat { border-color: #0000; background: none; }
.app.lit { background: linear-gradient(135deg, #bac2c6, #65737a); border-color: #a9b3b8; }
.ime { margin-left: auto; display: flex; align-items: center; gap: 3px; padding-right: 10px; }
.ime .dots { align-self: stretch; margin: 3px 7px 3px 0; }
.kana { font-size: 12px; line-height: 14px; width: 12px; font-feature-settings: normal; }
.q { margin: 0 2px; }
.caps { font: 700 6px/8px "Liberation Sans", sans-serif; width: 17px; }
.trend { width: 46px; display: flex; align-items: center; justify-content: center; border-left: 1px solid #5f6e77; border-radius: 8px 0 0 0; background: linear-gradient(#38464e, #0e1c23); }
.power { width: 79px; display: flex; align-items: center; gap: 12px; padding-left: 9px; border: 1px solid #4b5a63; border-width: 1px 1px 0; border-radius: 8px 0 0 0; }
.battery { width: 39px; height: 16px; border: 1px solid #d9e4da; outline: 1px solid #3a443d; border-right-width: 2px; background: linear-gradient(#3ca648, #0f7720); text-align: center; font: 700 10px/14px "Open Sans", sans-serif; }
.tray { display: flex; align-items: center; gap: 8px; padding-left: 6px; }
.clock { width: 62px; padding-top: 1px; text-align: center; font: 10px/13px "Open Sans", sans-serif; margin-left: 6px; }
.peek { width: 10px; border: 1px solid #6a777e; background: linear-gradient(135deg, #4b5a63, #15222a); }
```
